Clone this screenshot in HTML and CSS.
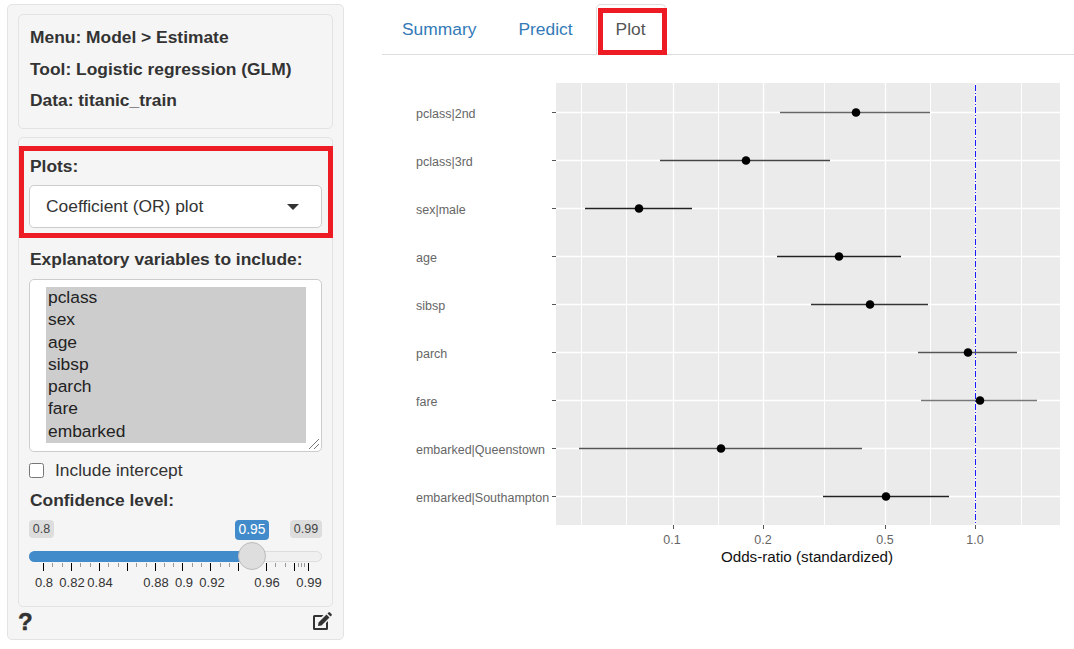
FILE: index.html
```html
<!DOCTYPE html>
<html lang="en">
<head>
    <meta charset="UTF-8">
    <meta name="viewport" content="width=device-width, initial-scale=1.0">
    <title>Logistic regression (GLM)</title>
    <link rel="stylesheet" href="styles.css">
</head>
<body>
    <div class="sidebar">
        <div class="well info">
            <p>Menu: Model &gt; Estimate</p>
            <p>Tool: Logistic regression (GLM)</p>
            <p>Data: titanic_train</p>
        </div>

        <div class="well form">
            <div class="highlight highlight-plots"></div>

            <label class="field-label">Plots:</label>
            <div class="dropdown">
                <span>Coefficient (OR) plot</span>
                <span class="caret"></span>
            </div>

            <label class="field-label vars-label">Explanatory variables to include:</label>
            <div class="listbox">
                <div class="options">
                    <div>pclass</div>
                    <div>sex</div>
                    <div>age</div>
                    <div>sibsp</div>
                    <div>parch</div>
                    <div>fare</div>
                    <div>embarked</div>
                </div>
                <svg class="grip" width="12" height="12" viewBox="0 0 12 12">
                    <path d="M1 11 L11 1 M6 11 L11 6" stroke="#777" stroke-width="1" fill="none"/>
                </svg>
            </div>

            <div class="checkbox-row">
                <span class="checkbox"></span>
                <span>Include intercept</span>
            </div>

            <label class="field-label conf-label">Confidence level:</label>
            <div class="slider">
                <div class="slider-labels">
                    <span class="tag tag-min">0.8</span>
                    <span class="tag tag-value">0.95</span>
                    <span class="tag tag-max">0.99</span>
                </div>
                <div class="track">
                    <div class="track-fill"></div>
                    <div class="handle"></div>
                </div>
                <svg class="ticks" width="293" height="36" viewBox="29 564 293 36">
                    <path d="M43.500 562v10M71.500 562v10M99.500 562v10M127.500 562v10M155.500 562v10M182.500 562v10M210.500 562v10M238.500 562v10M266.500 562v10M294.500 562v10M308.500 562v10" stroke="#000" stroke-width="1" fill="none"/>
                    <path d="M52.500 562v6M62.500 562v6M80.500 562v6M90.500 562v6M108.500 562v6M118.500 562v6M136.500 562v6M146.500 562v6M164.500 562v6M173.500 562v6M192.500 562v6M201.500 562v6M220.500 562v6M229.500 562v6M248.500 562v6M257.500 562v6M275.500 562v6M285.500 562v6M298.500 562v6M301.500 562v6M304.500 562v6" stroke="#999" stroke-width="1" fill="none"/>
                    <g class="tick-text">
                        <text x="44" y="588">0.8</text>
                        <text x="72" y="588">0.82</text>
                        <text x="100" y="588">0.84</text>
                        <text x="156" y="588">0.88</text>
                        <text x="184" y="588">0.9</text>
                        <text x="212" y="588">0.92</text>
                        <text x="267" y="588">0.96</text>
                        <text x="309" y="588">0.99</text>
                    </g>
                </svg>
            </div>
        </div>

        <div class="sidebar-footer">
            <span class="help">?</span>
            <svg class="edit-icon" width="21" height="19" viewBox="0 0 21 19">
                <path d="M2.500 3 H11.500 L9.500 5 H3 V16 H14 V11 L16 9 V16.500 A1.500 1.500 0 0 1 14.500 18 H2.500 A1.500 1.500 0 0 1 1 16.500 V4.500 A1.500 1.500 0 0 1 2.500 3 Z" fill="#333"/>
                <path d="M6.500 10.500 L14.500 2.500 L17.500 5.500 L9.500 13.500 L6 14 Z M15.500 1.500 L16.500 0.500 A1 1 0 0 1 18 0.500 L19.500 2 A1 1 0 0 1 19.500 3.500 L18.500 4.500 Z" fill="#333"/>
            </svg>
        </div>
    </div>

    <div class="main">
        <div class="tabs">
            <a class="tab">Summary</a>
            <a class="tab">Predict</a>
            <a class="tab active">Plot</a>
            <div class="highlight highlight-tab"></div>
        </div>

        <!-- viewBox uses page coordinates so the numbers read off the screenshot directly -->
        <svg class="plot" width="692" height="595" viewBox="382 55 692 595">
            <rect x="556" y="83" width="504" height="442" fill="#ebebeb"/>

            <g class="grid">
                <path d="M581.500 83V525M626.500 83V525M718.500 83V525M824.500 83V525M930.500 83V525M1021.500 83V525" stroke-width="1"/>
                <path d="M673.500 83V525M763.500 83V525M885.500 83V525M975.500 83V525" stroke-width="1.300"/>
                <path d="M556 112.500H1060M556 160.500H1060M556 208.500H1060M556 256.500H1060M556 304.500H1060M556 352.500H1060M556 400.500H1060M556 448.500H1060M556 496.500H1060" stroke-width="1.300"/>
            </g>

            <path class="axis-ticks" d="M552 112.500H556M552 160.500H556M552 208.500H556M552 256.500H556M552 304.500H556M552 352.500H556M552 400.500H556M552 448.500H556M552 496.500H556M673.500 525V529M763.500 525V529M885.500 525V529M975.500 525V529"/>

            <line class="ref-line" x1="975.500" y1="85" x2="975.500" y2="525"/>

            <g class="ranges">
                <line x1="780" y1="112.500" x2="930" y2="112.500" stroke="#666"/>
                <line x1="660" y1="160.500" x2="830" y2="160.500" stroke="#444"/>
                <line x1="585" y1="208.500" x2="692" y2="208.500" stroke="#222"/>
                <line x1="777" y1="256.500" x2="901" y2="256.500" stroke="#222"/>
                <line x1="811" y1="304.500" x2="928" y2="304.500" stroke="#333"/>
                <line x1="918" y1="352.500" x2="1017" y2="352.500" stroke="#555"/>
                <line x1="921" y1="400.500" x2="1037" y2="400.500" stroke="#777"/>
                <line x1="579" y1="448.500" x2="862" y2="448.500" stroke="#555"/>
                <line x1="823" y1="496.500" x2="949" y2="496.500" stroke="#222"/>
            </g>

            <g class="points">
                <circle cx="856" cy="112.500" r="4.300"/>
                <circle cx="746" cy="160.500" r="4.300"/>
                <circle cx="639" cy="208.500" r="4.300"/>
                <circle cx="839" cy="256.500" r="4.300"/>
                <circle cx="870" cy="304.500" r="4.300"/>
                <circle cx="968" cy="352.500" r="4.300"/>
                <circle cx="980" cy="400.500" r="4.300"/>
                <circle cx="721" cy="448.500" r="4.300"/>
                <circle cx="886" cy="496.500" r="4.300"/>
            </g>

            <g class="y-labels">
                <text x="416" y="118">pclass|2nd</text>
                <text x="416" y="166">pclass|3rd</text>
                <text x="416" y="214">sex|male</text>
                <text x="416" y="262">age</text>
                <text x="416" y="310">sibsp</text>
                <text x="416" y="358">parch</text>
                <text x="416" y="406">fare</text>
                <text x="416" y="454">embarked|Queenstown</text>
                <text x="416" y="502">embarked|Southampton</text>
            </g>

            <g class="x-labels">
                <text x="672" y="544">0.1</text>
                <text x="763" y="544">0.2</text>
                <text x="885" y="544">0.5</text>
                <text x="975" y="544">1.0</text>
            </g>

            <text class="x-title" x="807" y="562">Odds-ratio (standardized)</text>
        </svg>
    </div>
</body>
</html>
```

FILE: styles.css
```css
body {
    margin: 0;
    padding: 4px 0 0 7px;
    display: flex;
    align-items: flex-start;
    font-family: "Liberation Sans", Arial, sans-serif;
    font-size: 17.400px;
    color: #333;
    background-color: #fff;
}
.sidebar {
    width: 337px;
    height: 636px;
    box-sizing: border-box;
    padding: 9px 10px 0;
    background-color: #f5f5f5;
    border: 1px solid #e3e3e3;
    border-radius: 5px;
    flex-shrink: 0;
}
.well {
    background-color: #f5f5f5;
    border: 1px solid #e3e3e3;
    border-radius: 5px;
}
.info {
    height: 115px;
    box-sizing: border-box;
    padding: 7px 11px 0;
    font-weight: bold;
}
.info p {
    margin: 0;
    line-height: 31.500px;
}
.form {
    position: relative;
    height: 470px;
    box-sizing: border-box;
    margin-top: 8px;
    padding: 17px 10px 0;
}
.field-label {
    display: block;
    padding-left: 1px;
    font-weight: bold;
    line-height: 22px;
}
.dropdown {
    display: flex;
    justify-content: space-between;
    align-items: center;
    height: 43px;
    box-sizing: border-box;
    margin-top: 8px;
    padding: 0 22px 0 16px;
    background-color: #fff;
    border: 1px solid #ccc;
    border-radius: 5px;
}
.caret {
    width: 0;
    height: 0;
    border-left: 6.500px solid transparent;
    border-right: 6.500px solid transparent;
    border-top: 6.500px solid #333;
}
.vars-label {
    margin-top: 20px;
}
.listbox {
    position: relative;
    height: 173px;
    box-sizing: border-box;
    margin-top: 9px;
    padding: 7px 15px 0 16px;
    background-color: #fff;
    border: 1px solid #ccc;
    border-radius: 5px;
}
.options {
    background-color: #cdcdcd;
    padding-left: 2px;
    color: #222;
}
.options div {
    line-height: 20.300px;
    padding-bottom: 2px;
}
.grip {
    position: absolute;
    right: 1px;
    bottom: 1px;
}
.checkbox-row {
    display: flex;
    align-items: center;
    gap: 11px;
    margin-top: 8px;
    height: 20px;
}
.checkbox {
    width: 13px;
    height: 13px;
    background-color: #fff;
    border: 1px solid #767676;
    border-radius: 2.500px;
}
.conf-label {
    margin-top: 9px;
}
.slider {
    margin-top: 9px;
}
.slider-labels {
    display: flex;
    align-items: flex-start;
}
.tag {
    height: 18px;
    line-height: 18px;
    font-size: 12.500px;
    text-align: center;
    color: #444;
    background-color: #ddd;
    border-radius: 4px;
}
.tag-min {
    width: 25px;
}
.tag-max {
    width: 32px;
}
.tag-value {
    width: 34px;
    height: 20px;
    line-height: 20px;
    margin: 0 21px 0 181px;
    font-size: 13.800px;
    color: #fff;
    background-color: #428bca;
}
.track {
    position: relative;
    height: 11px;
    box-sizing: border-box;
    margin-top: 11px;
    background-color: #f0f0f0;
    border: 1px solid #ddd;
    border-radius: 6px;
}
.track-fill {
    position: absolute;
    left: -1px;
    top: -1px;
    width: 220px;
    height: 11px;
    background-color: #428bca;
    border-radius: 6px 0 0 6px;
}
.handle {
    position: absolute;
    left: 208px;
    top: -10px;
    width: 28px;
    height: 28px;
    box-sizing: border-box;
    background-color: #dedede;
    border: 1px solid #bbb;
    border-radius: 50%;
}
.ticks {
    display: block;
    margin-top: 1px;
}
.tick-text text {
    font-size: 13px;
    fill: #333;
    text-anchor: middle;
}
.sidebar-footer {
    display: flex;
    justify-content: space-between;
    align-items: center;
    height: 30px;
}
.help {
    font-size: 24px;
    line-height: 26px;
    font-weight: bold;
    -webkit-text-stroke: 0.5px #333;
}
.edit-icon {
    display: block;
    margin-top: -2px;
}
.main {
    margin-left: 38px;
    width: 692px;
}
.tabs {
    position: relative;
    display: flex;
    gap: 2px;
    height: 50px;
    border-bottom: 1px solid #ddd;
}
.tab {
    height: 50px;
    box-sizing: border-box;
    padding: 14px 19px 0;
    line-height: 20px;
    color: #337ab7;
    border: 1px solid transparent;
}
.tab.active {
    height: 51px;
    margin-left: 1px;
    color: #555;
    background-color: #fff;
    border-color: #ddd;
    border-bottom-color: #fff;
    border-radius: 5px 5px 0 0;
}
.highlight {
    position: absolute;
    box-sizing: border-box;
    border: 5px solid #ed1c24;
}
.highlight-plots {
    left: 0;
    top: 8px;
    width: 314px;
    height: 92px;
}
.highlight-tab {
    left: 216px;
    top: 4px;
    width: 69px;
    height: 47px;
}
.plot {
    display: block;
}
.grid path {
    stroke: #fff;
    fill: none;
}
.axis-ticks {
    stroke: #555;
    stroke-width: 1;
    fill: none;
}
.ref-line {
    stroke: #1a1aff;
    stroke-width: 1;
    stroke-dasharray: 6 2 1 2;
}
.ranges line {
    stroke-width: 1.300;
}
.y-labels text {
    font-size: 12.500px;
    fill: #666;
}
.x-labels text {
    font-size: 12.500px;
    fill: #666;
    text-anchor: middle;
}
.x-title {
    font-size: 15.200px;
    fill: #111;
    text-anchor: middle;
}
```
